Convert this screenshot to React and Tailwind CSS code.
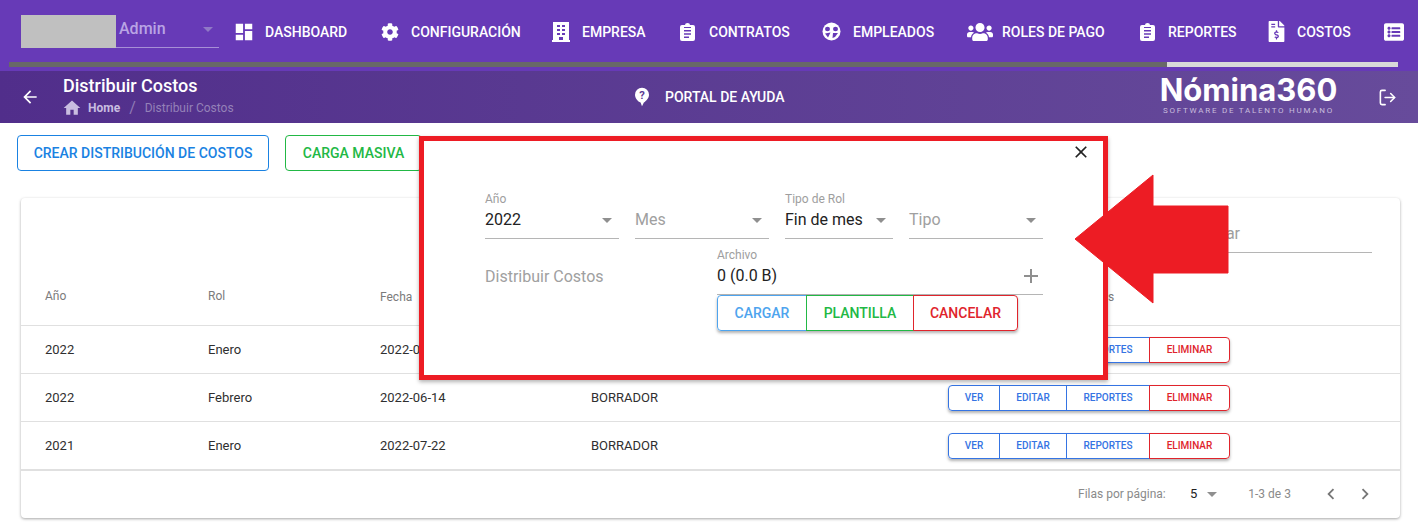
import React from "react";
import { MdDashboard, MdHome, MdArrowBack, MdClose, MdAdd, MdChevronLeft, MdChevronRight, MdArrowDropDown } from "react-icons/md";
import { FaCog, FaUsers, FaFileInvoiceDollar, FaListAlt } from "react-icons/fa";
import { FiLogOut } from "react-icons/fi";

const BuildingIcon = () => (
  <svg width="18" height="20" viewBox="0 0 18 20" fill="#fff">
    <path fillRule="evenodd" d="M1 0h16v18h1v2H0v-2h1zM5 3v2h3V3zm5 0v2h3V3zM5 7v2h3V7zm5 0v2h3V7zm-5 4v2h3v-2zm5 0v2h3v-2zm-3 4v3h4v-3z" />
  </svg>
);

const ClipboardIcon = () => (
  <svg width="15" height="18" viewBox="0 0 15 18" fill="#fff">
    <path fillRule="evenodd" d="M2 2h3a2.5 2 0 0 1 5 0h3a2 2 0 0 1 2 2v12a2 2 0 0 1-2 2H2a2 2 0 0 1-2-2V4a2 2 0 0 1 2-2zm2 5v1.5h7V7zm0 3.2v1.5h7v-1.5zm0 3.200v1.500h5v-1.500zM4 4h7v1H4z" />
  </svg>
);

const FaceIcon = () => (
  <svg width="19" height="19" viewBox="0 0 19 19">
    <circle cx="9.500" cy="9.500" r="9" fill="#fff" />
    <ellipse cx="5.500" cy="7" rx="2.500" ry="2.200" fill="#673ab7" />
    <ellipse cx="13.500" cy="7" rx="2.500" ry="2.200" fill="#673ab7" />
    <path d="M3 11.500 L8.500 10.500 L6 15.500 Z M11 11 L16 11 L13 15 L10.500 16 Z" fill="#673ab7" />
  </svg>
);

const HelpIcon = () => (
  <svg width="15" height="20" viewBox="0 0 15 20">
    <path d="M7.500 0a7.500 7.500 0 0 1 7.500 7.500c0 3.600-3 6.400-5.500 8.500L7.500 20 6 16C3 14.500 0 11.500 0 7.500A7.500 7.500 0 0 1 7.500 0z" fill="#fff" />
    <text x="7.500" y="12" textAnchor="middle" fontSize="12" fontWeight="700" fill="#5c3b93" fontFamily="Roboto, sans-serif">?</text>
  </svg>
);

const navItems = [
  { icon: <MdDashboard size={22} />, label: "DASHBOARD", width: "w-[146px]", box: "w-[43px]" },
  { icon: <FaCog size={18} />, label: "CONFIGURACIÓN", width: "w-[172px]", box: "w-[43px]" },
  { icon: <BuildingIcon />, label: "EMPRESA", width: "w-[126px]", box: "w-[42px]" },
  { icon: <ClipboardIcon />, label: "CONTRATOS", width: "w-[144px]", box: "w-[43px]" },
  { icon: <FaceIcon />, label: "EMPLEADOS", width: "w-[147px]", box: "w-[43px]" },
  { icon: <FaUsers size={26} />, label: "ROLES DE PAGO", width: "w-[169px]", box: "w-[45px]" },
  { icon: <ClipboardIcon />, label: "REPORTES", width: "w-[129px]", box: "w-[42px]" },
  { icon: <FaFileInvoiceDollar size={21} />, label: "COSTOS", width: "w-[116px]", box: "w-[42px]" },
];

const rows = [
  { year: "2022", rol: "Enero", fecha: "2022-06-14", estado: "BORRADOR" },
  { year: "2022", rol: "Febrero", fecha: "2022-06-14", estado: "BORRADOR" },
  { year: "2021", rol: "Enero", fecha: "2022-07-22", estado: "BORRADOR" },
];

const SelectField = ({ label, value, placeholder, width }) => (
  <div className={`${width} flex flex-col`}>
    <span className="h-[15px] text-xs leading-[15px] text-[#9e9e9e]">{label}</span>
    <div className="flex h-[32px] items-center justify-between border-b border-[#b5b5b5] pb-[6px]">
      <span className={`text-base ${value ? "text-[#222]" : "text-[#a0a0a0]"}`}>{value || placeholder}</span>
      <MdArrowDropDown size={24} className="shrink-0 text-[#8f8f8f]" />
    </div>
  </div>
);

const RowActions = () => (
  <div className="flex h-[26px] rounded text-[10px] font-medium shadow-[0_2px_3px_rgba(0,0,0,0.3)]">
    <button className="w-[52px] rounded-l border border-[#3574e3] text-[#3574e3]">VER</button>
    <button className="-ml-px w-[68px] border border-[#3574e3] text-[#3574e3]">EDITAR</button>
    <button className="-ml-px w-[84px] border border-[#3574e3] text-[#3574e3]">REPORTES</button>
    <button className="-ml-px w-[81px] rounded-r border border-[#e0242c] text-[#e0242c]">ELIMINAR</button>
  </div>
);

export default function App() {
  return (
    <div className="relative h-[526px] w-[1418px] overflow-hidden bg-white font-['Roboto',sans-serif] text-[#333]">
      {/* top nav */}
      <div className="h-[71px] bg-[#673ab7] pt-[15px]">
        <div className="flex h-[47px] overflow-hidden">
          <div className="ml-[21px] flex h-[33px] w-[198px] shrink-0 border-b border-[#a78fd6]">
            <div className="h-[33px] w-[95px] bg-[#c0c0c0]" />
            <span className="ml-[3px] text-base leading-[27px] font-medium text-[#b9a4e4]">Admin</span>
            <MdArrowDropDown size={24} className="mt-[2px] mr-[-1px] ml-auto text-[#9079c6]" />
          </div>
          <div className="ml-[3px] flex h-[33px] shrink-0">
            {navItems.map((item) => (
              <div key={item.label} className={`${item.width} flex items-center text-white`}>
                <div className={`${item.box} flex shrink-0 justify-center`}>{item.icon}</div>
                <span className="text-sm font-medium">{item.label}</span>
              </div>
            ))}
            <FaListAlt size={20} className="mt-[7px] ml-[13px] text-white" />
          </div>
        </div>
        <div className="ml-[9px] flex h-[5px] w-[1389px]">
          <div className="w-[1158px] bg-[#686868]" />
          <div className="w-[231px] bg-[#d9d9d9]" />
        </div>
      </div>

      {/* sub header */}
      <div className="flex h-[52px] items-center bg-linear-to-r from-[#512e8b] to-[#674b9b] text-white">
        <MdArrowBack size={20} className="ml-[20px]" />
        <div className="ml-[23px] w-[420px]">
          <div className="text-lg leading-[20px] font-medium">Distribuir Costos</div>
          <div className="mt-[2px] flex items-center text-xs leading-[16px]">
            <MdHome size={20} className="-ml-[1px] text-[#c9bde0]" />
            <span className="ml-[6px] font-bold text-[#c9bde0]">Home</span>
            <span className="mx-[9px] text-base leading-[16px] text-[#8f7ab5]">/</span>
            <span className="text-[#9481b8]">Distribuir Costos</span>
          </div>
        </div>
        <div className="ml-[152px] flex w-[14px] justify-center"><HelpIcon /></div>
        <span className="ml-[16px] text-sm font-medium">PORTAL DE AYUDA</span>
        <div className="-mt-[6px] ml-[375px] flex w-[178px] flex-col items-center">
          <span className="font-['Inter',sans-serif] text-[31px] leading-[32px] font-bold">Nómina360</span>
          <span className="text-[8px] leading-[9px] tracking-[1.75px] text-[#c8bddd]">SOFTWARE DE TALENTO HUMANO</span>
        </div>
        <FiLogOut size={19} className="ml-[40px]" />
      </div>

      {/* page actions */}
      <div className="flex gap-[16px] pt-[12px] pl-[17px]">
        <button className="h-[36px] w-[252px] rounded border border-[#1a82e2] text-sm font-medium text-[#1a82e2]">CREAR DISTRIBUCIÓN DE COSTOS</button>
        <button className="h-[36px] w-[137px] rounded border border-[#22b845] text-sm font-medium text-[#22b845]">CARGA MASIVA</button>
      </div>

      {/* table card */}
      <div className="mt-[27px] ml-[21px] h-[320px] w-[1379px] rounded bg-white shadow-[0_1px_3px_rgba(0,0,0,0.35)]">
        <div className="flex h-[127px] flex-col">
          <div className="mt-[19px] ml-[1010px] flex h-[36px] w-[341px] items-end justify-end border-b border-[#b5b5b5] pr-[132px] pb-[6px] text-base text-[#9e9e9e]">ar</div>
          <div className="mt-[35px] flex text-xs text-[#7b7b7b]">
            <span className="ml-[24px] w-[163px]">Año</span>
            <span className="w-[172px]">Rol</span>
            <span className="mt-px w-[500px]">Fecha</span>
            <span className="mt-px ml-[228px]">s</span>
          </div>
        </div>
        {rows.map((row) => (
          <div key={row.year + row.rol} className="flex h-[48px] items-center border-t border-[#e0e0e0] text-[13px] text-[#2f2f2f]">
            <span className="ml-[24px] w-[163px]">{row.year}</span>
            <span className="w-[172px]">{row.rol}</span>
            <span className="w-[211px]">{row.fecha}</span>
            <span className="w-[357px]">{row.estado}</span>
            <RowActions />
          </div>
        ))}
        <div className="flex h-[48px] items-center border-t-2 border-[#e0e0e0] text-xs text-[#8a8a8a]">
          <span className="ml-[1057px] w-[112px]">Filas por página:</span>
          <span className="text-[13px] text-[#222]">5</span>
          <MdArrowDropDown size={24} className="ml-[3px] text-[#8f8f8f]" />
          <span className="ml-[24px] w-[72px]">1-3 de 3</span>
          <MdChevronLeft size={22} className="text-[#777]" />
          <MdChevronRight size={22} className="ml-[12px] text-[#777]" />
        </div>
      </div>

      {/* modal with red highlight */}
      <div className="absolute top-[136px] left-[419px] h-[244px] w-[689px] border-[5px] border-[#ed1c24] bg-white pt-[51px] pl-[61px] shadow-[0_2px_4px_rgba(0,0,0,0.3)]">
        <MdClose size={20} className="absolute top-[1px] right-[12px] text-[#222]" />
        <div className="flex gap-[16px]">
          <SelectField label="Año" value="2022" width="w-[134px]" />
          <SelectField label="" placeholder="Mes" width="w-[134px]" />
          <SelectField label="Tipo de Rol" value="Fin de mes" width="w-[108px]" />
          <SelectField label="" placeholder="Tipo" width="w-[134px]" />
        </div>
        <div className="mt-[6px] flex">
          <span className="mt-[20px] w-[232px] text-base text-[#a0a0a0]">Distribuir Costos</span>
          <div>
            <div className="flex h-[50px] w-[326px] flex-col border-b border-[#b5b5b5]">
              <span className="text-xs leading-[20px] text-[#9e9e9e]">Archivo</span>
              <div className="-mt-[1px] flex items-center justify-between text-base leading-[22px] text-[#222]">
                <span>0 (0.0 B)</span>
                <MdAdd size={24} className="text-[#8f8f8f]" />
              </div>
            </div>
            <div className="flex h-[36px] w-[301px] rounded text-sm font-medium shadow-[0_2px_3px_rgba(0,0,0,0.3)]">
              <button className="w-[90px] rounded-l border border-[#4ea4ee] text-[#4ea4ee]">CARGAR</button>
              <button className="-ml-px w-[108px] border border-[#22b845] text-[#22b845]">PLANTILLA</button>
              <button className="-ml-px w-[105px] rounded-r border border-[#e0242c] text-[#e0242c]">CANCELAR</button>
            </div>
          </div>
        </div>
      </div>

      {/* annotation arrow */}
      <svg className="absolute top-[174px] left-[1074px]" width="156" height="132" viewBox="0 0 156 132">
        <path d="M1 65 L79 1 L79 32 L154 32 L154 99 L79 99 L79 129 Z" fill="#ed1c24" stroke="#ed1c24" strokeWidth="1" strokeLinejoin="round" />
      </svg>
    </div>
  );
}
